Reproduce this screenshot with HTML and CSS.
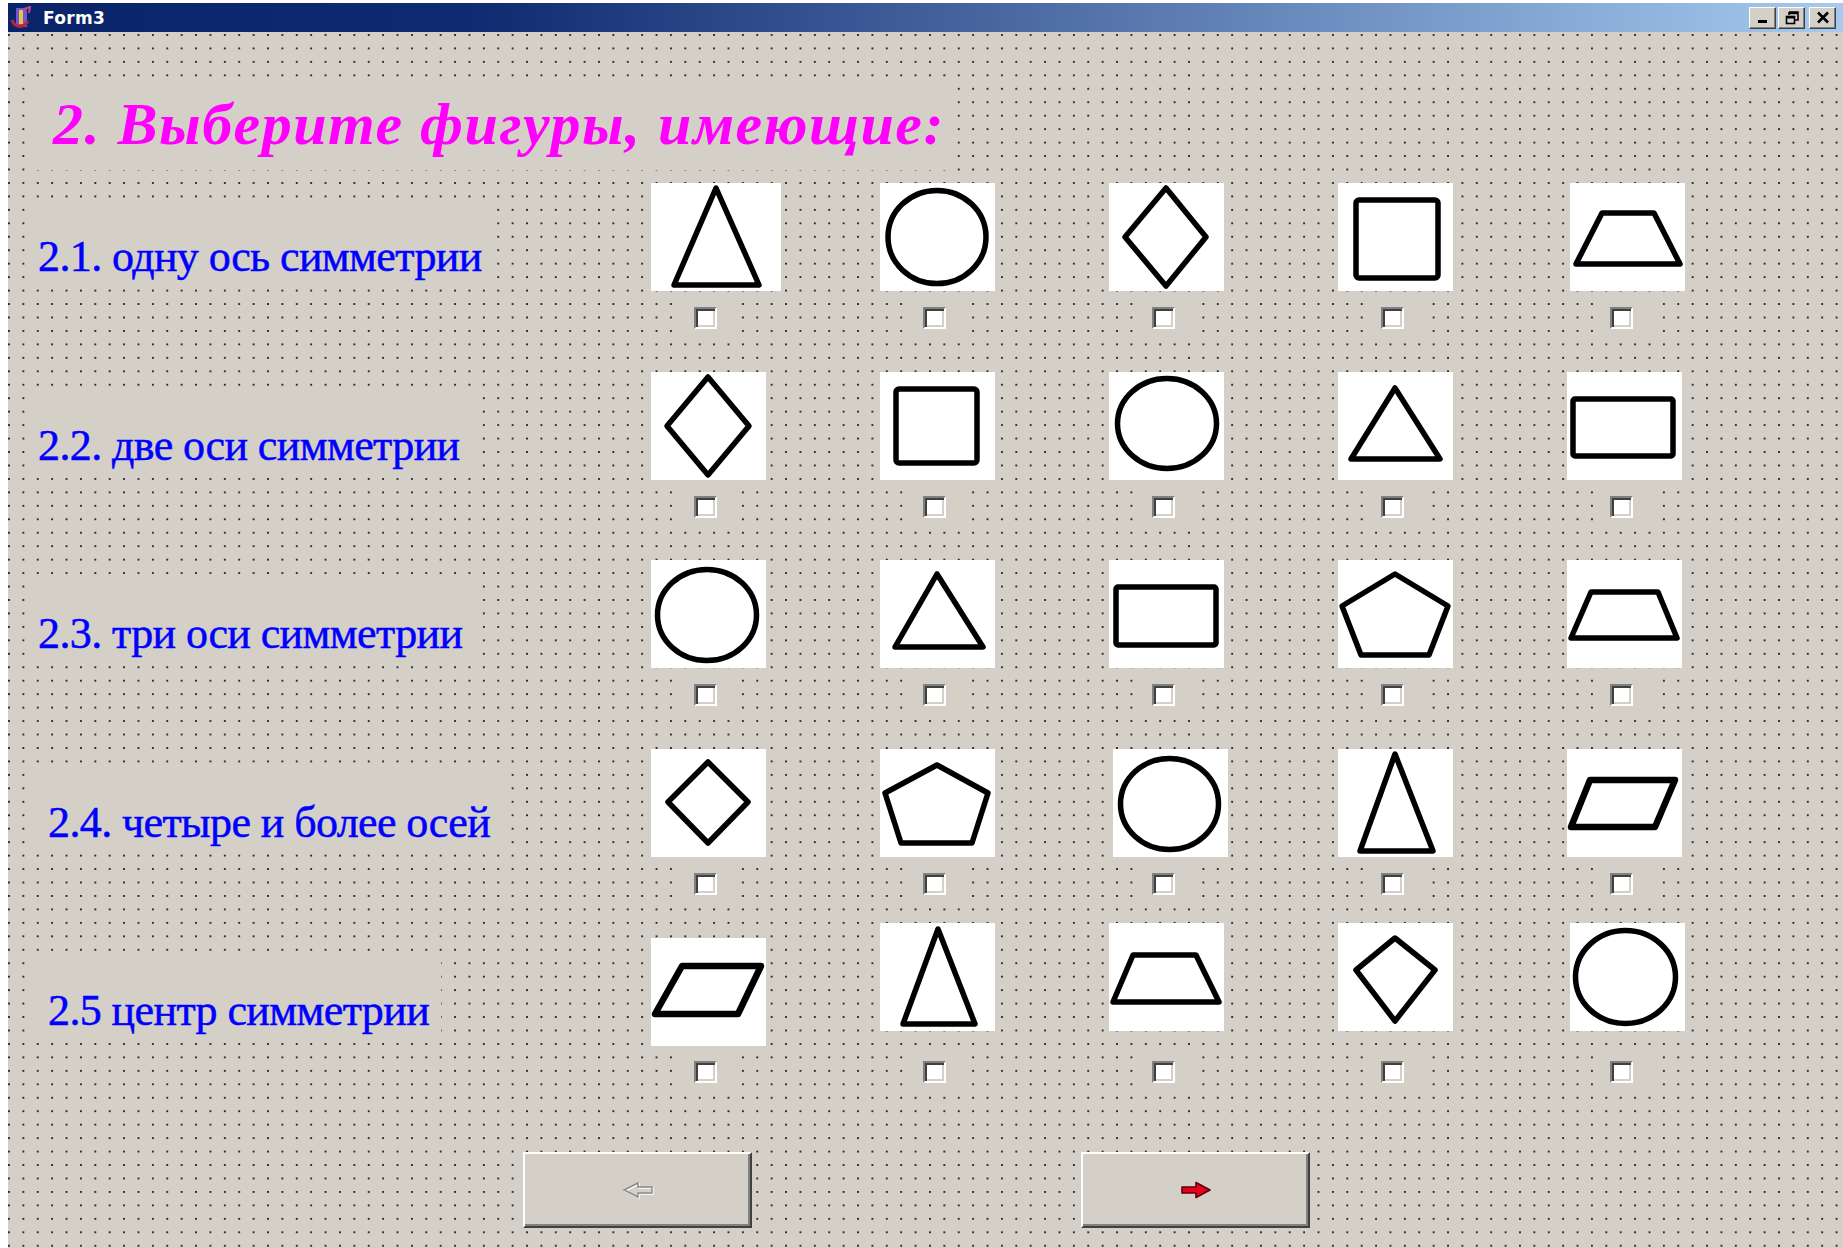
FILE: index.html
```html
<!DOCTYPE html>
<html lang="ru">
<head>
<meta charset="utf-8">
<title>Form3</title>
<link rel="stylesheet" href="styles.css">
</head>
<body>
<div class="window">
  <div class="titlebar">
    <svg class="app-icon" width="22" height="24" viewBox="0 0 22 24">
      <rect x="6" y="2" width="11" height="19" fill="#6a5acd"/>
      <rect x="9" y="4" width="4" height="14" fill="#f0c040"/>
      <path d="M2 14 C5 22 13 23 18 15" stroke="#c0203c" stroke-width="3" fill="none"/>
      <path d="M14 3 L20 1 L19 7" stroke="#d04080" stroke-width="2" fill="none"/>
    </svg>
    <span class="title">Form3</span>
    <div class="caption-buttons">
      <span class="cap-btn"><svg width="12" height="12" viewBox="0 0 12 12"><rect x="1" y="8" width="9" height="3" fill="#000"/></svg></span>
      <span class="cap-btn restore"><svg width="14" height="14" viewBox="0 0 14 14"><path d="M4 1h9v8h-3M4 1v3M4 2.5h9" stroke="#000" stroke-width="1.6" fill="none"/><rect x="1.5" y="5.5" width="8" height="7" stroke="#000" stroke-width="1.6" fill="none"/><rect x="1" y="5" width="9" height="2.5" fill="#000"/></svg></span>
      <span class="cap-btn close"><svg width="14" height="13" viewBox="0 0 14 13"><path d="M2 1.5 L12 11.5 M12 1.5 L2 11.5" stroke="#000" stroke-width="2.6"/></svg></span>
    </div>
  </div>

  <div class="client">
    <h1 class="heading">2. Выберите фигуры, имеющие:</h1>

    <div class="rows">
      <!-- 2.1 -->
      <div class="row">
        <div class="label">2.1. одну ось симметрии</div>
        <div class="cell"><div class="pic"><svg class="fig wide" viewBox="0 0 130 108"><polygon points="65,5 108,102 23,102"/></svg></div><div class="ctl"><span class="box"></span></div></div>
        <div class="cell"><div class="pic"><svg class="fig" viewBox="0 0 115 108"><ellipse cx="57" cy="54" rx="49" ry="46.5"/></svg></div><div class="ctl"><span class="box"></span></div></div>
        <div class="cell"><div class="pic"><svg class="fig" viewBox="0 0 115 108"><polygon points="57,5 97,54 57,103 16,54"/></svg></div><div class="ctl"><span class="box"></span></div></div>
        <div class="cell"><div class="pic"><svg class="fig" viewBox="0 0 115 108"><rect x="18" y="17" width="82" height="78" rx="3"/></svg></div><div class="ctl"><span class="box"></span></div></div>
        <div class="cell"><div class="pic"><svg class="fig shift3" viewBox="0 0 115 108"><polygon points="32,30 84,30 110,81 6,81"/></svg></div><div class="ctl"><span class="box"></span></div></div>
      </div>

      <!-- 2.2 -->
      <div class="row">
        <div class="label">2.2. две оси симметрии</div>
        <div class="cell"><div class="pic"><svg class="fig" viewBox="0 0 115 108"><polygon points="57,5 98,54 57,103 16,54"/></svg></div><div class="ctl"><span class="box"></span></div></div>
        <div class="cell"><div class="pic"><svg class="fig" viewBox="0 0 115 108"><rect x="16" y="17" width="81" height="74" rx="3"/></svg></div><div class="ctl"><span class="box"></span></div></div>
        <div class="cell"><div class="pic"><svg class="fig" viewBox="0 0 115 108"><ellipse cx="58" cy="51.5" rx="49.5" ry="45"/></svg></div><div class="ctl"><span class="box"></span></div></div>
        <div class="cell"><div class="pic"><svg class="fig" viewBox="0 0 115 108"><polygon points="57,16 102,87 13,87"/></svg></div><div class="ctl"><span class="box"></span></div></div>
        <div class="cell"><div class="pic"><svg class="fig" viewBox="0 0 115 108"><rect x="6" y="27" width="100" height="57" rx="2"/></svg></div><div class="ctl"><span class="box"></span></div></div>
      </div>

      <!-- 2.3 -->
      <div class="row">
        <div class="label">2.3. три оси симметрии</div>
        <div class="cell"><div class="pic"><svg class="fig" viewBox="0 0 115 108"><ellipse cx="56" cy="55" rx="49.5" ry="45.5"/></svg></div><div class="ctl"><span class="box"></span></div></div>
        <div class="cell"><div class="pic"><svg class="fig" viewBox="0 0 115 108"><polygon points="57,14 103,87 15,87"/></svg></div><div class="ctl"><span class="box"></span></div></div>
        <div class="cell"><div class="pic"><svg class="fig" viewBox="0 0 115 108"><rect x="7" y="27" width="100" height="58" rx="2"/></svg></div><div class="ctl"><span class="box"></span></div></div>
        <div class="cell"><div class="pic"><svg class="fig" viewBox="0 0 115 108"><polygon points="57,14 110,46 91,95 23,95 4,46"/></svg></div><div class="ctl"><span class="box"></span></div></div>
        <div class="cell"><div class="pic"><svg class="fig" viewBox="0 0 115 108"><polygon points="24,32 91,32 110,78 4,78"/></svg></div><div class="ctl"><span class="box"></span></div></div>
      </div>

      <!-- 2.4 -->
      <div class="row">
        <div class="label indent">2.4. четыре и более осей</div>
        <div class="cell"><div class="pic"><svg class="fig" viewBox="0 0 115 108"><polygon points="57,13 97,53 57,94 17,53"/></svg></div><div class="ctl"><span class="box"></span></div></div>
        <div class="cell"><div class="pic"><svg class="fig" viewBox="0 0 115 108"><polygon points="57,16 108,44 92,94 21,94 5,44"/></svg></div><div class="ctl"><span class="box"></span></div></div>
        <div class="cell"><div class="pic"><svg class="fig shift4" viewBox="0 0 115 108"><ellipse cx="56.5" cy="55" rx="49" ry="45.5"/></svg></div><div class="ctl"><span class="box"></span></div></div>
        <div class="cell"><div class="pic"><svg class="fig" viewBox="0 0 115 108"><polygon points="57,5 95,102 22,102"/></svg></div><div class="ctl"><span class="box"></span></div></div>
        <div class="cell"><div class="pic"><svg class="fig thick" viewBox="0 0 115 108"><polygon points="23,31 108,31 88,78 4,78"/></svg></div><div class="ctl"><span class="box"></span></div></div>
      </div>

      <!-- 2.5 -->
      <div class="row">
        <div class="label indent">2.5 центр симметрии</div>
        <div class="cell"><div class="pic"><svg class="fig thick down1" viewBox="0 0 115 108"><polygon points="31,28 110,28 87,76 4,76"/></svg></div><div class="ctl"><span class="box"></span></div></div>
        <div class="cell"><div class="pic"><svg class="fig up" viewBox="0 0 115 108"><polygon points="58,6 95,101 23,101"/></svg></div><div class="ctl"><span class="box"></span></div></div>
        <div class="cell"><div class="pic"><svg class="fig up" viewBox="0 0 115 108"><polygon points="24,32 87,32 110,79 4,79"/></svg></div><div class="ctl"><span class="box"></span></div></div>
        <div class="cell"><div class="pic"><svg class="fig up" viewBox="0 0 115 108"><polygon points="57,15 97,47 57,98 18,47"/></svg></div><div class="ctl"><span class="box"></span></div></div>
        <div class="cell"><div class="pic"><svg class="fig up shift3" viewBox="0 0 115 108"><ellipse cx="55.5" cy="54" rx="50" ry="46.5"/></svg></div><div class="ctl"><span class="box"></span></div></div>
      </div>
    </div>

    <div class="nav">
      <button class="btn" type="button" disabled>
        <svg width="32" height="18" viewBox="0 0 32 18">
          <polygon points="31,7 17,7 17,3 3,10 17,17 17,13 31,13" fill="none" stroke="#fff" stroke-width="1.4"/>
          <polygon points="30,6 16,6 16,2 2,9 16,16 16,12 30,12" fill="none" stroke="#8a8884" stroke-width="1.4"/>
        </svg>
      </button>
      <button class="btn" type="button">
        <svg width="32" height="18" viewBox="0 0 32 18">
          <polygon points="2,6 16,6 16,1.5 30,9 16,16.5 16,12 2,12" fill="#e8001c" stroke="#5a0008" stroke-width="1.6" stroke-linejoin="round"/>
        </svg>
      </button>
    </div>
  </div>
</div>
</body>
</html>
```

FILE: styles.css
```css
html, body {
  margin: 0;
  height: 100%;
  overflow: hidden;
  background: #fff;
}

.window {
  margin: 3px 0 0 8px;
  height: 1245px;
  display: flex;
  flex-direction: column;
}

/* caption bar */
.titlebar {
  height: 29px;
  flex: none;
  display: flex;
  align-items: center;
  background: linear-gradient(to right, #0a246a 0%, #0e2a70 25%, #a6caf0 100%);
}

.app-icon {
  margin-left: 2px;
  flex: none;
}

.title {
  margin-left: 11px;
  color: #fff;
  font-family: "DejaVu Sans", "Liberation Sans", sans-serif;
  font-weight: bold;
  font-size: 17px;
  letter-spacing: 0.3px;
}

.caption-buttons {
  margin-left: auto;
  margin-right: 7px;
  display: flex;
  gap: 2px;
  align-items: center;
}

.cap-btn {
  width: 27px;
  height: 22px;
  box-sizing: border-box;
  background: #d4d0c8;
  border-top: 1px solid #fff;
  border-left: 1px solid #fff;
  border-right: 1px solid #404040;
  border-bottom: 1px solid #404040;
  box-shadow: inset -1px -1px 0 #808080;
  display: flex;
  align-items: center;
  justify-content: center;
}

.cap-btn.close {
  margin-left: 2px;
}

/* form surface with the designer grid */
.client {
  flex: 1;
  background-color: #d4d0c8;
  background-image: radial-gradient(circle at 1px 1px, #2e2e2e 0.9px, rgba(46, 46, 46, 0) 1.4px);
  background-size: 14.4px 13.46px;
  background-position: 0 2px;
  overflow: hidden;
}

.heading {
  margin: 53px 0 0 19px;
  width: 921px;
  height: 85px;
  box-sizing: border-box;
  padding-left: 26px;
  background: #d4d0c8;
  color: #ff00ff;
  font-family: "Liberation Serif", "Times New Roman", serif;
  font-style: italic;
  font-weight: bold;
  font-size: 60px;
  line-height: 78px;
  letter-spacing: 1.5px;
  white-space: nowrap;
}

.rows {
  margin-top: 13px;
}

.row {
  display: grid;
  grid-template-columns: 643px repeat(5, 229px);
  height: 188.5px;
}

.label {
  align-self: start;
  justify-self: start;
  margin: 20px 0 0 17px;
  height: 82px;
  box-sizing: border-box;
  padding: 26px 12px 0 13px;
  background: #d4d0c8;
  color: #0000ff;
  font-family: "Liberation Serif", "Times New Roman", serif;
  font-size: 44px;
  line-height: 56px;
  letter-spacing: -0.6px;
  -webkit-text-stroke: 0.5px #0000ff;
  white-space: nowrap;
}

.label.indent {
  margin-left: 27px;
}

.cell {
  display: flex;
  flex-direction: column;
}

.pic {
  height: 117px;
}

.fig {
  display: block;
  width: 115px;
  height: 108px;
  background: #fff;
  fill: none;
  stroke: #000;
  stroke-width: 5.5;
  stroke-linejoin: round;
}

.fig.wide {
  width: 130px;
}

.fig.thick {
  stroke-width: 6.5;
}

.fig.shift3 {
  margin-left: 3px;
}

.fig.shift4 {
  margin-left: 4px;
}

.fig.up {
  margin-top: -14px;
}

.fig.down1 {
  margin-top: 1px;
}

/* checkbox control */
.ctl {
  width: 52px;
  height: 36px;
  margin-left: 32px;
  box-sizing: border-box;
  padding: 7px 0 0 11px;
  background: #d4d0c8;
}

.box {
  display: block;
  width: 23px;
  height: 22px;
  box-sizing: border-box;
  background: #fff;
  border-top: 2px solid #808080;
  border-left: 2px solid #808080;
  border-right: 2px solid #fff;
  border-bottom: 2px solid #fff;
  box-shadow: inset 2px 2px 0 #404040, inset -2px -2px 0 #d4d0c8;
}

/* navigation buttons */
.nav {
  display: flex;
  gap: 329px;
  margin: 26px 0 0 515px;
}

.btn {
  width: 229px;
  height: 76px;
  padding: 0;
  box-sizing: border-box;
  background: #d4d0c8;
  border-top: 2px solid #fff;
  border-left: 2px solid #fff;
  border-right: 2px solid #404040;
  border-bottom: 2px solid #404040;
  box-shadow: inset -2px -2px 0 #808080;
  display: flex;
  align-items: center;
  justify-content: center;
}

.btn svg {
  display: block;
}
```
